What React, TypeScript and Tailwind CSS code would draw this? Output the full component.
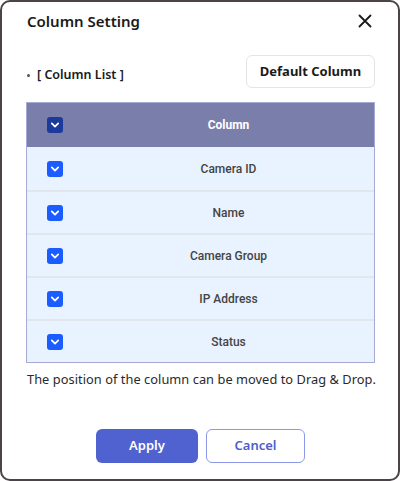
import { useState } from "react";

const columns = ["Camera ID", "Name", "Camera Group", "IP Address", "Status"];

function Check({ dark }: { dark?: boolean }) {
  return (
    <span
      className={`flex h-4 w-4 items-center justify-center rounded-[3px] ${
        dark ? "bg-[#1b3a9c]" : "bg-[#1a5cff]"
      }`}
    >
      <svg width="10" height="10" viewBox="0 0 10 10" fill="none">
        <path d="M1.8 3.4 5 6.6 8.2 3.4" stroke="white" strokeWidth="1.8" strokeLinecap="round" strokeLinejoin="round" />
      </svg>
    </span>
  );
}

export default function App() {
  const [checked] = useState(columns.map(() => true));

  return (
    <div className="h-[481px] w-[400px] bg-white">
      <div className="flex h-full w-full flex-col rounded-[10px] border-2 border-[#4b4347] bg-white pl-[24px] pr-[23px] font-['Noto_Sans',sans-serif] text-[#1a1a1a]">
        {/* header */}
        <div className="flex h-[40px] items-center justify-between pb-[2px] pl-[1px]">
          <h1 className="text-[15px] font-semibold leading-5">Column Setting</h1>
          <svg width="14" height="14" viewBox="0 0 14 14" className="mr-[3px]">
            <path d="M1.5 1.5 12.5 12.5M12.5 1.5 1.5 12.5" stroke="#1a1a1a" strokeWidth="1.8" strokeLinecap="round" />
          </svg>
        </div>

        <div className="mt-[13px] flex items-center justify-between">
          <div className="flex items-center gap-[7px] pl-[1px] pt-[7px] text-[12.5px] font-semibold">
            <span className="h-[3px] w-[3px] rounded-full bg-[#555]" />
            <span>[ Column List ]</span>
          </div>
          <button className="h-[33px] w-[129px] rounded-[6px] border border-[#e4e4e4] bg-white text-[13px] font-bold">
            Default Column
          </button>
        </div>

        {/* table */}
        <div className="mt-[14px] border border-[#a6abd6] font-['Roboto',sans-serif]">
          <div className="flex h-[44px] items-center bg-[#7a7eab]">
            <div className="flex w-[56px] justify-center">
              <Check dark />
            </div>
            <div className="flex-1 text-center text-[12px] font-bold text-white">Column</div>
          </div>
          {columns.map((c, i) => (
            <div
              key={c}
              className={`flex h-[43px] items-center bg-[#e8f3ff] ${i > 0 ? "border-t-2 border-[#e1e6ed]" : ""}`}
            >
              <div className="flex w-[56px] justify-center">{checked[i] && <Check />}</div>
              <div className="flex-1 text-center text-[12px] font-medium text-[#444]">{c}</div>
            </div>
          ))}
        </div>

        <p className="mt-[7px] whitespace-nowrap pl-[1px] text-[12.8px] tracking-[0.05px] text-[#2a2a2a]">
          The position of the column can be moved to Drag &amp; Drop.
        </p>

        <div className="mt-auto mb-[16px] flex justify-center gap-[8px]">
          <button className="h-[34px] w-[102px] rounded-[6px] bg-[#5062d0] text-[13px] font-semibold text-white">
            Apply
          </button>
          <button className="h-[34px] w-[99px] rounded-[6px] border border-[#8d98ea] bg-white text-[13px] font-semibold text-[#4f5fc8]">
            Cancel
          </button>
        </div>
      </div>
    </div>
  );
}
